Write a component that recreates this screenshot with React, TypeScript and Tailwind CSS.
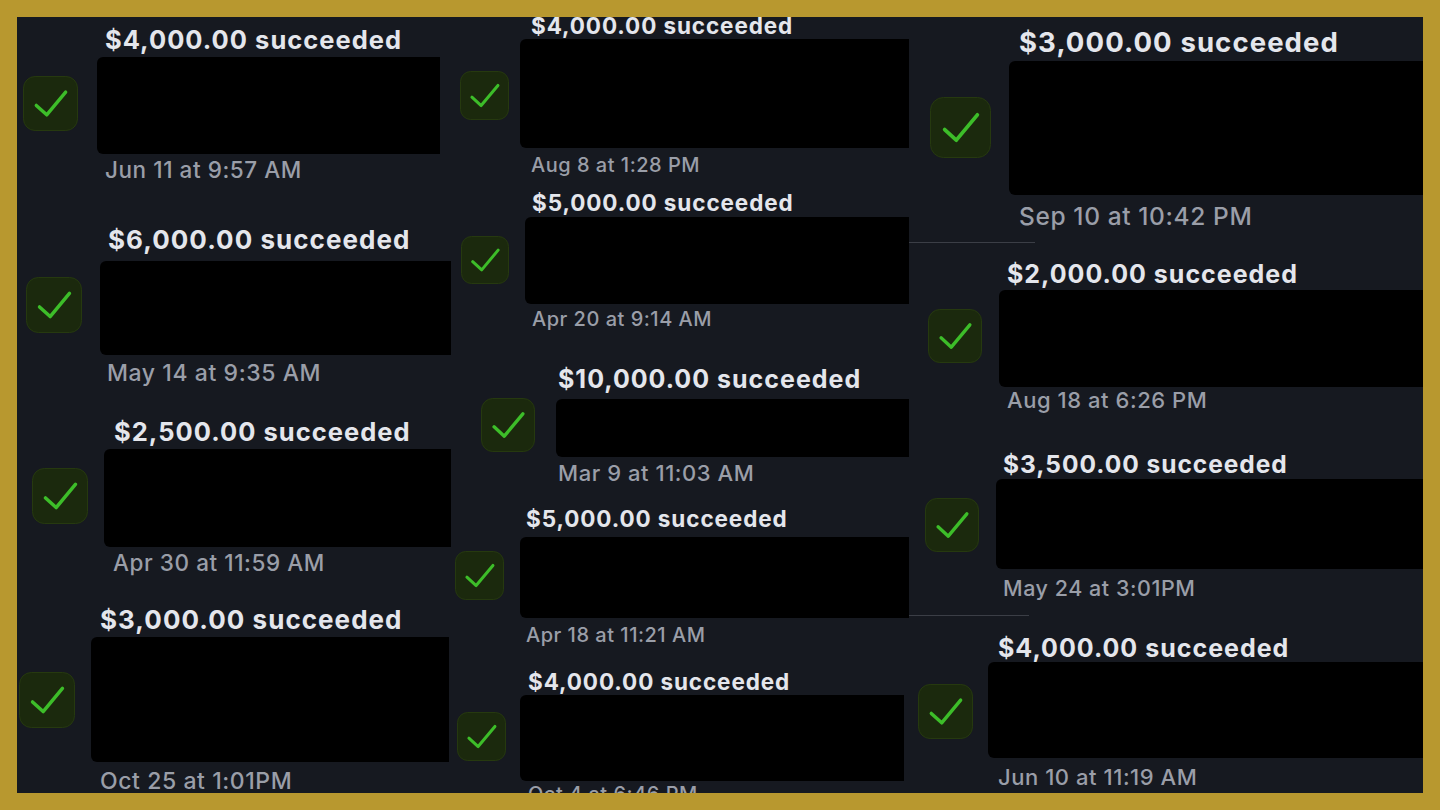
type Payment = {
  amount: string;
  date: string;
  wrap: string;
  icon: string;
  body: string;
  title: string;
  box: string;
  when: string;
  rule?: string;
};

const left: Payment[] = [
  {
    amount: "$4,000.00",
    date: "Jun 11 at 9:57 AM",
    wrap: "mt-[10px]",
    icon: "mt-[49px] ml-[6px] size-[55px]",
    body: "ml-[19px]",
    title: "ml-[8px] text-[25.5px]",
    box: "mt-[4.5px] w-[343px] h-[97px]",
    when: "mt-[5px] ml-[8px] text-[22.5px]",
  },
  {
    amount: "$6,000.00",
    date: "May 14 at 9:35 AM",
    wrap: "mt-[45px]",
    icon: "mt-[50px] ml-[9px] size-[56px]",
    body: "ml-[18px]",
    title: "ml-[8px] text-[26px]",
    box: "mt-[8.5px] w-[351px] h-[94px]",
    when: "mt-[7px] ml-[7px] text-[23px]",
  },
  {
    amount: "$2,500.00",
    date: "Apr 30 at 11:59 AM",
    wrap: "mt-[34px]",
    icon: "mt-[49px] ml-[15px] size-[56px]",
    body: "ml-[16px]",
    title: "ml-[10px] text-[25.5px]",
    box: "mt-[4.5px] w-[347px] h-[98px]",
    when: "mt-[5px] ml-[9px] text-[22.5px]",
  },
  {
    amount: "$3,000.00",
    date: "Oct 25 at 1:01PM",
    wrap: "mt-[32px]",
    icon: "mt-[65px] ml-[2px] size-[56px]",
    body: "ml-[16px]",
    title: "ml-[9px] text-[26px]",
    box: "mt-[4.5px] w-[358px] h-[125px]",
    when: "mt-[8px] ml-[9px] text-[23px]",
  },
];

const middle: Payment[] = [
  {
    amount: "$4,000.00",
    date: "Aug 8 at 1:28 PM",
    wrap: "-mt-[2px]",
    icon: "mt-[56px] ml-[6px] size-[49px]",
    body: "ml-[11px]",
    title: "ml-[11px] text-[22.5px]",
    box: "mt-[1.5px] w-[389px] h-[109px]",
    when: "mt-[7px] ml-[11px] text-[20px]",
  },
  {
    amount: "$5,000.00",
    date: "Apr 20 at 9:14 AM",
    wrap: "mt-[17px]",
    icon: "mt-[44px] ml-[7px] size-[48px]",
    body: "ml-[16px]",
    title: "ml-[7px] text-[22.5px]",
    box: "mt-[2.5px] w-[384px] h-[87px]",
    when: "mt-[5px] ml-[7px] text-[20px]",
    rule: "top-[25px] w-[126px]",
  },
  {
    amount: "$10,000.00",
    date: "Mar 9 at 11:03 AM",
    wrap: "mt-[38px]",
    icon: "mt-[31px] ml-[27px] size-[54px]",
    body: "ml-[21px]",
    title: "ml-[2px] text-[25px]",
    box: "mt-[6.5px] w-[353px] h-[58px]",
    when: "mt-[5px] ml-[2px] text-[22px]",
  },
  {
    amount: "$5,000.00",
    date: "Apr 18 at 11:21 AM",
    wrap: "mt-[24px]",
    icon: "mt-[43px] ml-[1px] size-[49px]",
    body: "ml-[16px]",
    title: "ml-[6px] text-[22.5px]",
    box: "mt-[6.5px] w-[389px] h-[81px]",
    when: "mt-[7px] ml-[6px] text-[20px]",
    rule: "top-[78px] w-[120px]",
  },
  {
    amount: "$4,000.00",
    date: "Oct 4 at 6:46 PM",
    wrap: "mt-[26px]",
    icon: "mt-[41px] ml-[3px] size-[49px]",
    body: "ml-[14px]",
    title: "ml-[8px] text-[22.5px]",
    box: "mt-[1.5px] w-[384px] h-[86px]",
    when: "mt-[3px] ml-[8px] text-[20px]",
  },
];

const right: Payment[] = [
  {
    amount: "$3,000.00",
    date: "Sep 10 at 10:42 PM",
    wrap: "mt-[12px]",
    icon: "mt-[68px] ml-[18px] size-[61px]",
    body: "ml-[18px]",
    title: "ml-[10px] text-[27.5px]",
    box: "mt-[4.5px] w-[440px] h-[134px]",
    when: "mt-[9px] ml-[10px] text-[24.5px]",
  },
  {
    amount: "$2,000.00",
    date: "Aug 18 at 6:26 PM",
    wrap: "mt-[33px]",
    icon: "mt-[47px] ml-[16px] size-[54px]",
    body: "ml-[17px]",
    title: "ml-[8px] text-[25px]",
    box: "mt-[3.5px] w-[440px] h-[97px]",
    when: "mt-[2px] ml-[8px] text-[22px]",
  },
  {
    amount: "$3,500.00",
    date: "May 24 at 3:01PM",
    wrap: "mt-[41px]",
    icon: "mt-[46px] ml-[13px] size-[54px]",
    body: "ml-[17px]",
    title: "ml-[7px] text-[24.5px]",
    box: "mt-[2.5px] w-[440px] h-[90px]",
    when: "mt-[9px] ml-[7px] text-[21.5px]",
  },
  {
    amount: "$4,000.00",
    date: "Jun 10 at 11:19 AM",
    wrap: "mt-[36px]",
    icon: "mt-[48px] ml-[6px] size-[55px]",
    body: "ml-[15px]",
    title: "ml-[10px] text-[25px]",
    box: "mt-[1.5px] w-[450px] h-[96px]",
    when: "mt-[8px] ml-[10px] text-[22px]",
  },
];

function CheckBadge({ className }: { className: string }) {
  return (
    <div
      className={`${className} shrink-0 rounded-[22%] border border-[#26390f] bg-[#1b290d] flex items-center justify-center`}
    >
      <svg viewBox="0 0 56 56" className="h-full w-full">
        <path
          d="M13 30 L24 40 L44 16"
          fill="none"
          stroke="#3dbd29"
          strokeWidth="3.6"
          strokeLinecap="round"
          strokeLinejoin="round"
        />
      </svg>
    </div>
  );
}

function PaymentRow({ p }: { p: Payment }) {
  return (
    <div className={`${p.wrap} flex items-start`}>
      <CheckBadge className={p.icon} />
      <div className={`${p.body} flex flex-col items-start`}>
        <p
          className={`${p.title} whitespace-nowrap font-bold leading-none tracking-[0.04em] text-[#e4e6ec]`}
        >
          {p.amount} succeeded
        </p>
        <div className={`${p.box} relative shrink-0 rounded-l-md bg-black`}>
          {p.rule && (
            <span className={`${p.rule} absolute left-full h-px bg-[#3b3e46]`} />
          )}
        </div>
        <p
          className={`${p.when} whitespace-nowrap font-medium leading-none tracking-[0.025em] text-[#9a9ea8]`}
        >
          {p.date}
        </p>
      </div>
    </div>
  );
}

export default function App() {
  return (
    <div className="h-[810px] w-[1440px] bg-[#b8982f] p-[17px] font-['Inter',sans-serif]">
      <div className="flex h-full w-full overflow-hidden bg-[#161920]">
        <div className="flex w-[437px] shrink-0 flex-col">
          {left.map((p, i) => (
            <PaymentRow key={i} p={p} />
          ))}
        </div>
        <div className="flex w-[458px] shrink-0 flex-col">
          {middle.map((p, i) => (
            <PaymentRow key={i} p={p} />
          ))}
        </div>
        <div className="flex min-w-0 flex-1 flex-col">
          {right.map((p, i) => (
            <PaymentRow key={i} p={p} />
          ))}
        </div>
      </div>
    </div>
  );
}
